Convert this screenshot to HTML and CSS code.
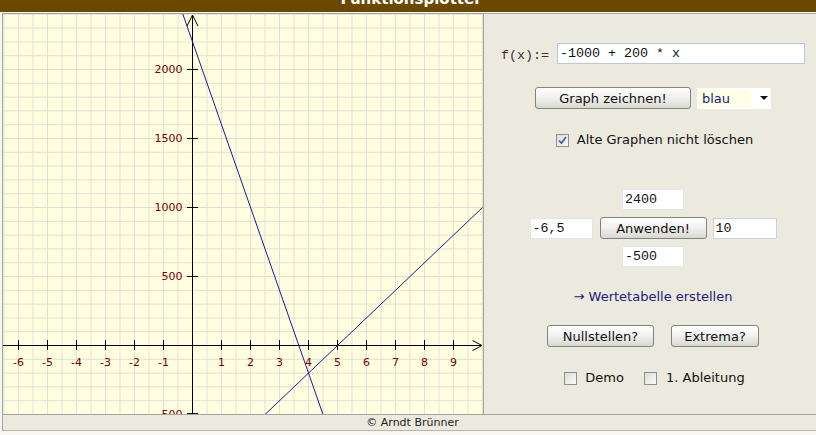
FILE: index.html
```html
<!DOCTYPE html>
<html lang="de">
<head>
<meta charset="utf-8">
<title>Funktionsplotter</title>
<link rel="stylesheet" href="styles.css">
</head>
<body>
<header class="titlebar"><h1 class="title">Funktionsplotter</h1></header>
<div class="frame">
  <div class="main">
    <div class="plot">
      <svg class="plot-svg" width="480" height="400" viewBox="0 0 480 400">
        <defs>
          <pattern id="grid" patternUnits="userSpaceOnUse" x="0.5" y="13.6" width="14.5" height="13.8">
            <rect x="0" y="0" width="1" height="13.8" fill="#dfdfd6"/>
            <rect x="0" y="0" width="14.5" height="1" fill="#dfdfd6"/>
          </pattern>
        </defs>
        <rect width="480" height="400" fill="url(#grid)"/>
        <g class="axes" stroke="#000" stroke-width="1" fill="none">
          <line x1="189.5" y1="1" x2="189.5" y2="400"/>
          <line x1="0" y1="331.5" x2="479" y2="331.5"/>
          <polyline points="184,12 189.5,1 195,12"/>
          <polyline points="469.5,326.5 479,331.5 469.5,336.5"/>
          <line x1="184" y1="55.5" x2="195" y2="55.5"/>
          <line x1="184" y1="124.5" x2="195" y2="124.5"/>
          <line x1="184" y1="193.5" x2="195" y2="193.5"/>
          <line x1="184" y1="262.5" x2="195" y2="262.5"/>
          <line x1="184" y1="399.5" x2="195" y2="399.5"/>
          <line x1="15.5" y1="326" x2="15.5" y2="336"/>
          <line x1="44.5" y1="326" x2="44.5" y2="336"/>
          <line x1="73.5" y1="326" x2="73.5" y2="336"/>
          <line x1="102.5" y1="326" x2="102.5" y2="336"/>
          <line x1="131.5" y1="326" x2="131.5" y2="336"/>
          <line x1="160.5" y1="326" x2="160.5" y2="336"/>
          <line x1="218.5" y1="326" x2="218.5" y2="336"/>
          <line x1="247.5" y1="326" x2="247.5" y2="336"/>
          <line x1="276.5" y1="326" x2="276.5" y2="336"/>
          <line x1="305.5" y1="326" x2="305.5" y2="336"/>
          <line x1="334.5" y1="326" x2="334.5" y2="336"/>
          <line x1="363.5" y1="326" x2="363.5" y2="336"/>
          <line x1="392.5" y1="326" x2="392.5" y2="336"/>
          <line x1="421.5" y1="326" x2="421.5" y2="336"/>
          <line x1="450.5" y1="326" x2="450.5" y2="336"/>
        </g>
        <g class="ylabels">
          <text x="179.5" y="55.5">2000</text>
          <text x="179.5" y="124.5">1500</text>
          <text x="179.5" y="193.5">1000</text>
          <text x="179.5" y="262.5">500</text>
          <text x="179.5" y="400.5">-500</text>
        </g>
        <g class="xlabels">
          <text x="15.5" y="348">-6</text>
          <text x="44.5" y="348">-5</text>
          <text x="73.5" y="348">-4</text>
          <text x="102.5" y="348">-3</text>
          <text x="131.5" y="348">-2</text>
          <text x="160.5" y="348">-1</text>
          <text x="218.5" y="348">1</text>
          <text x="247.5" y="348">2</text>
          <text x="276.5" y="348">3</text>
          <text x="305.5" y="348">4</text>
          <text x="334.5" y="348">5</text>
          <text x="363.5" y="348">6</text>
          <text x="392.5" y="348">7</text>
          <text x="421.5" y="348">8</text>
          <text x="450.5" y="348">9</text>
        </g>
        <g stroke="#1a1a98" stroke-width="1" fill="none">
          <line x1="179.8" y1="0" x2="320" y2="400.5"/>
          <line x1="262" y1="400.5" x2="479.5" y2="193.5"/>
        </g>
      </svg>
    </div>
    <div class="panel">
      <div class="fx-row">
        <span class="fx-label">f(x):=</span>
        <input class="fx-input" type="text" value="-1000 + 200 * x">
      </div>
      <div class="draw-row">
        <button class="btn btn-draw" type="button">Graph zeichnen!</button>
        <div class="select"><span class="select-value">blau</span><span class="select-arrow"></span></div>
      </div>
      <div class="check-row">
        <span class="checkbox"><svg width="11" height="11" viewBox="0 0 11 11"><path d="M2 5.5 L4.5 8.2 L9 2" stroke="#4a5ea8" stroke-width="1.8" fill="none"/></svg></span>
        <span class="check-label">Alte Graphen nicht löschen</span>
      </div>
      <div class="window">
        <input class="num num-top" type="text" value="2400">
        <div class="window-mid">
          <input class="num num-left" type="text" value="-6,5">
          <button class="btn btn-apply" type="button">Anwenden!</button>
          <input class="num num-right" type="text" value="10">
        </div>
        <input class="num num-top" type="text" value="-500">
      </div>
      <a class="table-link">→ Wertetabelle erstellen</a>
      <div class="btn-row">
        <button class="btn btn-zero" type="button">Nullstellen?</button>
        <button class="btn btn-extrema" type="button">Extrema?</button>
      </div>
      <div class="options-row">
        <span class="checkbox"></span>
        <span class="check-label">Demo</span>
        <span class="checkbox checkbox-second"></span>
        <span class="check-label label-deriv">1. Ableitung</span>
      </div>
    </div>
  </div>
  <footer class="footer">© Arndt Brünner</footer>
</div>
</body>
</html>
```
FILE: styles.css
```css
html, body {
  margin: 0;
  padding: 0;
  overflow: hidden;
}
body {
  width: 822px;
  height: 435px;
  background: #f8f6f0;
  font-family: "DejaVu Sans", sans-serif;
  color: #111;
}
.titlebar {
  height: 12px;
  background: #6a4800;
  overflow: hidden;
  text-align: center;
}
.title {
  margin: -8px 0 0;
  font: bold 15px/15px "DejaVu Sans", sans-serif;
  color: #fff;
}
.frame {
  margin: 1px 0 0 2px;
  width: 819px;
  border-top: 1px solid #a4a4a0;
  border-left: 1px solid #a4a4a0;
}
.main {
  display: flex;
  height: 400px;
}
.plot {
  flex: none;
  width: 480px;
  height: 400px;
  background: #ffffe0;
}
.plot-svg {
  display: block;
}
.ylabels text {
  font-family: "DejaVu Sans", sans-serif;
  font-size: 11px;
  fill: #7a0000;
  text-anchor: end;
  dominant-baseline: central;
}
.xlabels text {
  font-family: "DejaVu Sans", sans-serif;
  font-size: 11px;
  fill: #7a0000;
  text-anchor: middle;
  dominant-baseline: central;
}
.panel {
  flex: 1;
  border-left: 1px solid #a4a4a0;
  background: #ece9df;
  display: flex;
  flex-direction: column;
  align-items: center;
  padding-top: 29px;
  font-size: 13px;
}
.fx-row {
  display: flex;
  align-items: center;
  gap: 8px;
  height: 21px;
}
.fx-label {
  font-family: "Liberation Mono", monospace;
  font-size: 13.33px;
  color: #333;
  padding-top: 3px;
}
.fx-input {
  box-sizing: border-box;
  width: 248px;
  height: 21px;
  margin: 0;
  padding: 0 2px;
  border: 1px solid #b6c8da;
  background: #fff;
  font-family: "Liberation Mono", monospace;
  font-size: 13.33px;
  color: #111;
  outline: none;
}
.draw-row {
  display: flex;
  align-items: center;
  gap: 6px;
  margin-top: 23px;
  height: 22px;
}
.btn {
  box-sizing: border-box;
  height: 22px;
  margin: 0;
  padding: 0;
  border: 1px solid #838380;
  border-radius: 3px;
  background: linear-gradient(#ffffff, #f2f2ef 45%, #d8d8d3);
  font-family: "DejaVu Sans", sans-serif;
  font-size: 13px;
  color: #111;
}
.btn-draw { width: 156px; }
.btn-apply { width: 107px; }
.btn-zero { width: 107px; }
.btn-extrema { width: 88px; }
.select {
  box-sizing: border-box;
  width: 74px;
  height: 21px;
  background: #fff;
  display: flex;
  align-items: center;
  padding-left: 1px;
}
.select-value {
  width: 53px;
  height: 17px;
  line-height: 17px;
  padding-left: 4px;
  box-sizing: border-box;
  background: #ffffe6;
  color: #1a1a80;
  font-size: 13px;
}
.select-arrow {
  margin-left: 9px;
  width: 0;
  height: 0;
  border-left: 4px solid transparent;
  border-right: 4px solid transparent;
  border-top: 4px solid #111;
}
.check-row {
  display: flex;
  align-items: center;
  gap: 8px;
  height: 16px;
  margin-top: 23px;
  padding-left: 3px;
}
.checkbox {
  box-sizing: border-box;
  width: 13px;
  height: 13px;
  border: 1px solid #8e8f92;
  background: linear-gradient(135deg, #dcdcd6, #fbfbf9);
  display: flex;
  align-items: center;
  justify-content: center;
}
.checkbox svg {
  display: block;
}
.check-label {
  font-size: 13px;
  line-height: 16px;
  color: #111;
}
.window {
  display: flex;
  flex-direction: column;
  align-items: center;
  gap: 7px;
  margin-top: 41px;
}
.window-mid {
  display: flex;
  align-items: center;
  gap: 6px;
  height: 22px;
}
.num {
  box-sizing: border-box;
  width: 62px;
  height: 21px;
  margin: 0;
  padding: 0 2px;
  border: 1px solid #e2e6ea;
  background: #fff;
  font-family: "Liberation Mono", monospace;
  font-size: 13.33px;
  color: #111;
  outline: none;
}
.num-left { width: 63px; margin-right: 1px; }
.num-right { width: 64px; border-color: #c6d4e2; }
.table-link {
  margin-top: 22px;
  height: 16px;
  line-height: 16px;
  font-size: 13px;
  color: #20207a;
}
.btn-row {
  display: flex;
  gap: 17px;
  margin-top: 20px;
}
.options-row {
  display: flex;
  align-items: center;
  height: 16px;
  margin-top: 23px;
  padding-left: 3px;
}
.options-row .checkbox { margin-right: 8px; }
.options-row .checkbox-second { margin-left: 20px; margin-right: 9px; }
.footer {
  height: 15px;
  border-top: 1px solid #a4a4a0;
  border-bottom: 1px solid #b4b4b0;
  background: #ece9df;
  font-size: 11px;
  line-height: 15px;
  text-align: center;
  color: #222;
}
```
